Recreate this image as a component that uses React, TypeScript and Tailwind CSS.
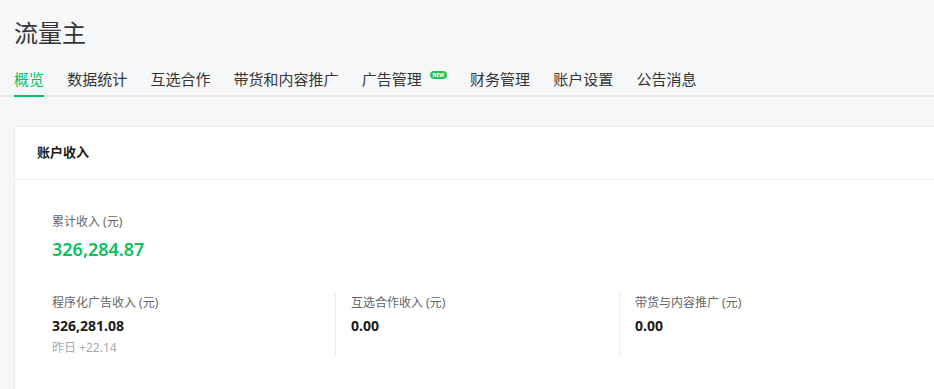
import React from "react";

const tabs = ["概览", "数据统计", "互选合作", "带货和内容推广", "广告管理", "财务管理", "账户设置", "公告消息"];

export default function App() {
  return (
    <div
      className="w-full h-[389px] overflow-hidden bg-[#f6f7f9] text-[#353535]"
      style={{ fontFamily: '"Noto Sans", "Noto Sans CJK SC", sans-serif' }}
    >
      <div className="w-[1000px]">
        <div className="pl-[14px] pt-[16px]">
          <h1 className="text-[24px] leading-[34px] font-normal text-[#353535]">流量主</h1>
        </div>
        <div className="mt-[18px] pl-[14px] flex items-end border-b-2 border-[#e8e9ec]">
          {tabs.map((t, i) => (
            <div key={t} className={`relative flex items-start ${i === 0 ? "" : "ml-[23.2px]"}`}>
              <div
                className={`text-[15px] leading-[22px] pb-[5px] ${
                  i === 0 ? "text-[#07c160] border-b-2 border-[#07c160] -mb-[2px]" : "text-[#353535]"
                }`}
              >
                {t}
              </div>
              {t === "广告管理" && (
                <span className="ml-[8px] mt-[3px] h-[8px] w-[17px] rounded-full bg-[#2fc25b] text-white text-[5px] leading-[8px] text-center font-bold">
                  NEW
                </span>
              )}
            </div>
          ))}
        </div>
        <div className="mt-[29px] ml-[14px] bg-white border border-[#ececee] rounded-[4px]">
          <div className="h-[53px] pl-[22px] flex items-center border-b border-[#ececee]">
            <span className="text-[13px] font-bold text-[#1a1a1a]">账户收入</span>
          </div>
          <div className="pl-[37px] pt-[33px] pb-[60px]">
            <div className="text-[12px] leading-[18px] text-[#666]">累计收入 (元)</div>
            <div className="mt-[6px] text-[18px] leading-[24px] font-semibold text-[#07c160]">326,284.87</div>
            <div className="mt-[32px] flex">
              <div className="w-[284px] h-[64px] pt-[1px] border-r border-[#ececee]">
                <div className="text-[12px] leading-[18px] text-[#666]">程序化广告收入 (元)</div>
                <div className="mt-[4px] text-[14px] leading-[20px] font-bold text-[#1a1a1a]">326,281.08</div>
                <div className="mt-[3px] text-[12px] leading-[18px] text-[#aaa]">昨日 +22.14</div>
              </div>
              <div className="w-[284px] h-[64px] pt-[1px] pl-[15px] border-r border-[#ececee]">
                <div className="text-[12px] leading-[18px] text-[#666]">互选合作收入 (元)</div>
                <div className="mt-[4px] text-[14px] leading-[20px] font-bold text-[#1a1a1a]">0.00</div>
              </div>
              <div className="w-[284px] h-[64px] pt-[1px] pl-[15px]">
                <div className="text-[12px] leading-[18px] text-[#666]">带货与内容推广 (元)</div>
                <div className="mt-[4px] text-[14px] leading-[20px] font-bold text-[#1a1a1a]">0.00</div>
              </div>
            </div>
          </div>
        </div>
      </div>
    </div>
  );
}
